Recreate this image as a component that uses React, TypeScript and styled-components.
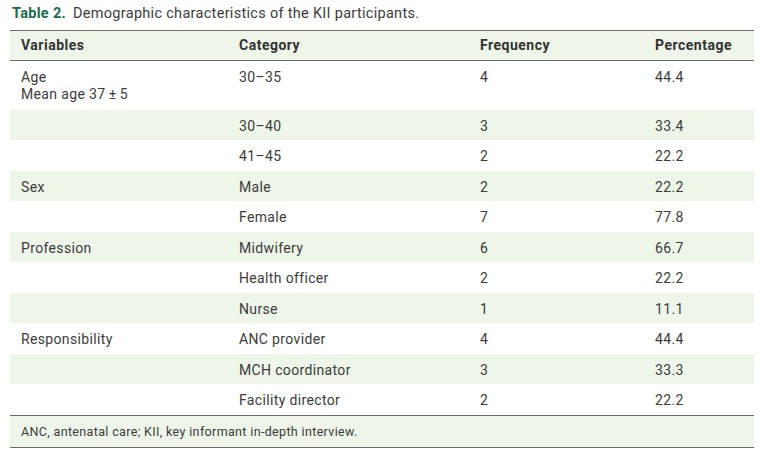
import React from 'react';
import styled, { createGlobalStyle } from 'styled-components';

const GlobalStyle = createGlobalStyle`
  body {
    margin: 0;
    background: #ffffff;
    font-family: Roboto, "Liberation Sans", sans-serif;
    color: #3a3a3a;
  }
`;

type Row = {
  variable?: string[];
  category: string;
  frequency: string;
  percentage: string;
};

const rows: Row[] = [
  { variable: ['Age', 'Mean age 37\u2009±\u20095'], category: '30–35', frequency: '4', percentage: '44.4' },
  { category: '30–40', frequency: '3', percentage: '33.4' },
  { category: '41–45', frequency: '2', percentage: '22.2' },
  { variable: ['Sex'], category: 'Male', frequency: '2', percentage: '22.2' },
  { category: 'Female', frequency: '7', percentage: '77.8' },
  { variable: ['Profession'], category: 'Midwifery', frequency: '6', percentage: '66.7' },
  { category: 'Health officer', frequency: '2', percentage: '22.2' },
  { category: 'Nurse', frequency: '1', percentage: '11.1' },
  { variable: ['Responsibility'], category: 'ANC provider', frequency: '4', percentage: '44.4' },
  { category: 'MCH coordinator', frequency: '3', percentage: '33.3' },
  { category: 'Facility director', frequency: '2', percentage: '22.2' },
];

function App() {
  return (
    <>
      <GlobalStyle />
      <Page>
        <Caption>
          <Label>Table 2.</Label> Demographic characteristics of the KII participants.
        </Caption>
        <StTable>
          <colgroup>
            <col style={{ width: 218 }} />
            <col style={{ width: 241 }} />
            <col style={{ width: 175 }} />
            <col />
          </colgroup>
          <thead>
            <tr>
              <Th>Variables</Th>
              <Th>Category</Th>
              <Th>Frequency</Th>
              <Th>Percentage</Th>
            </tr>
          </thead>
          <tbody>
            {rows.map((r, i) => (
              <BodyRow key={i} $striped={i % 2 === 1} $tall={!!r.variable && r.variable.length > 1}>
                <Td>
                  {r.variable?.map((line) => (
                    <div key={line}>{line}</div>
                  ))}
                </Td>
                <Td>{r.category}</Td>
                <Td>{r.frequency}</Td>
                <Td>{r.percentage}</Td>
              </BodyRow>
            ))}
          </tbody>
        </StTable>
        <Footnote>ANC, antenatal care; KII, key informant in-depth interview.</Footnote>
      </Page>
    </>
  );
}

export default App;

const Page = styled.div`
  width: 744px;
  padding: 5px 10px 0;
`;

const Caption = styled.div`
  font-size: 14.5px;
  line-height: 18px;
  letter-spacing: 0.3px;
  padding-left: 2px;
  margin-bottom: 7px;
  color: #3c3c3c;
`;

const Label = styled.span`
  font-weight: 700;
  color: #1b6b4a;
  margin-right: 3px;
`;

const StTable = styled.table`
  width: 100%;
  border-collapse: collapse;
  table-layout: fixed;
  font-size: 14px;
  letter-spacing: 0.35px;
`;

const Th = styled.th`
  background: #eef5e9;
  border-top: 1.5px solid #6b6b6b;
  border-bottom: 1.5px solid #6b6b6b;
  text-align: left;
  font-weight: 700;
  letter-spacing: 0.5px;
  color: #333333;
  padding: 6px 11px 6px;
  line-height: 17px;
`;

const BodyRow = styled.tr<{ $striped: boolean; $tall: boolean }>`
  background: ${(p) => (p.$striped ? '#eef5e9' : '#ffffff')};
  height: ${(p) => (p.$tall ? '49px' : '30.5px')};
`;

const Td = styled.td`
  padding: 8px 11px 5px;
  line-height: 17px;
  vertical-align: top;
  color: #3c3c3c;
`;

const Footnote = styled.div`
  background: #eef5e9;
  border-top: 1.5px solid #6b6b6b;
  border-bottom: 1.5px solid #6b6b6b;
  font-size: 12.5px;
  line-height: 16px;
  letter-spacing: 0.35px;
  padding: 8px 11px 7px;
  color: #3c3c3c;
`;
